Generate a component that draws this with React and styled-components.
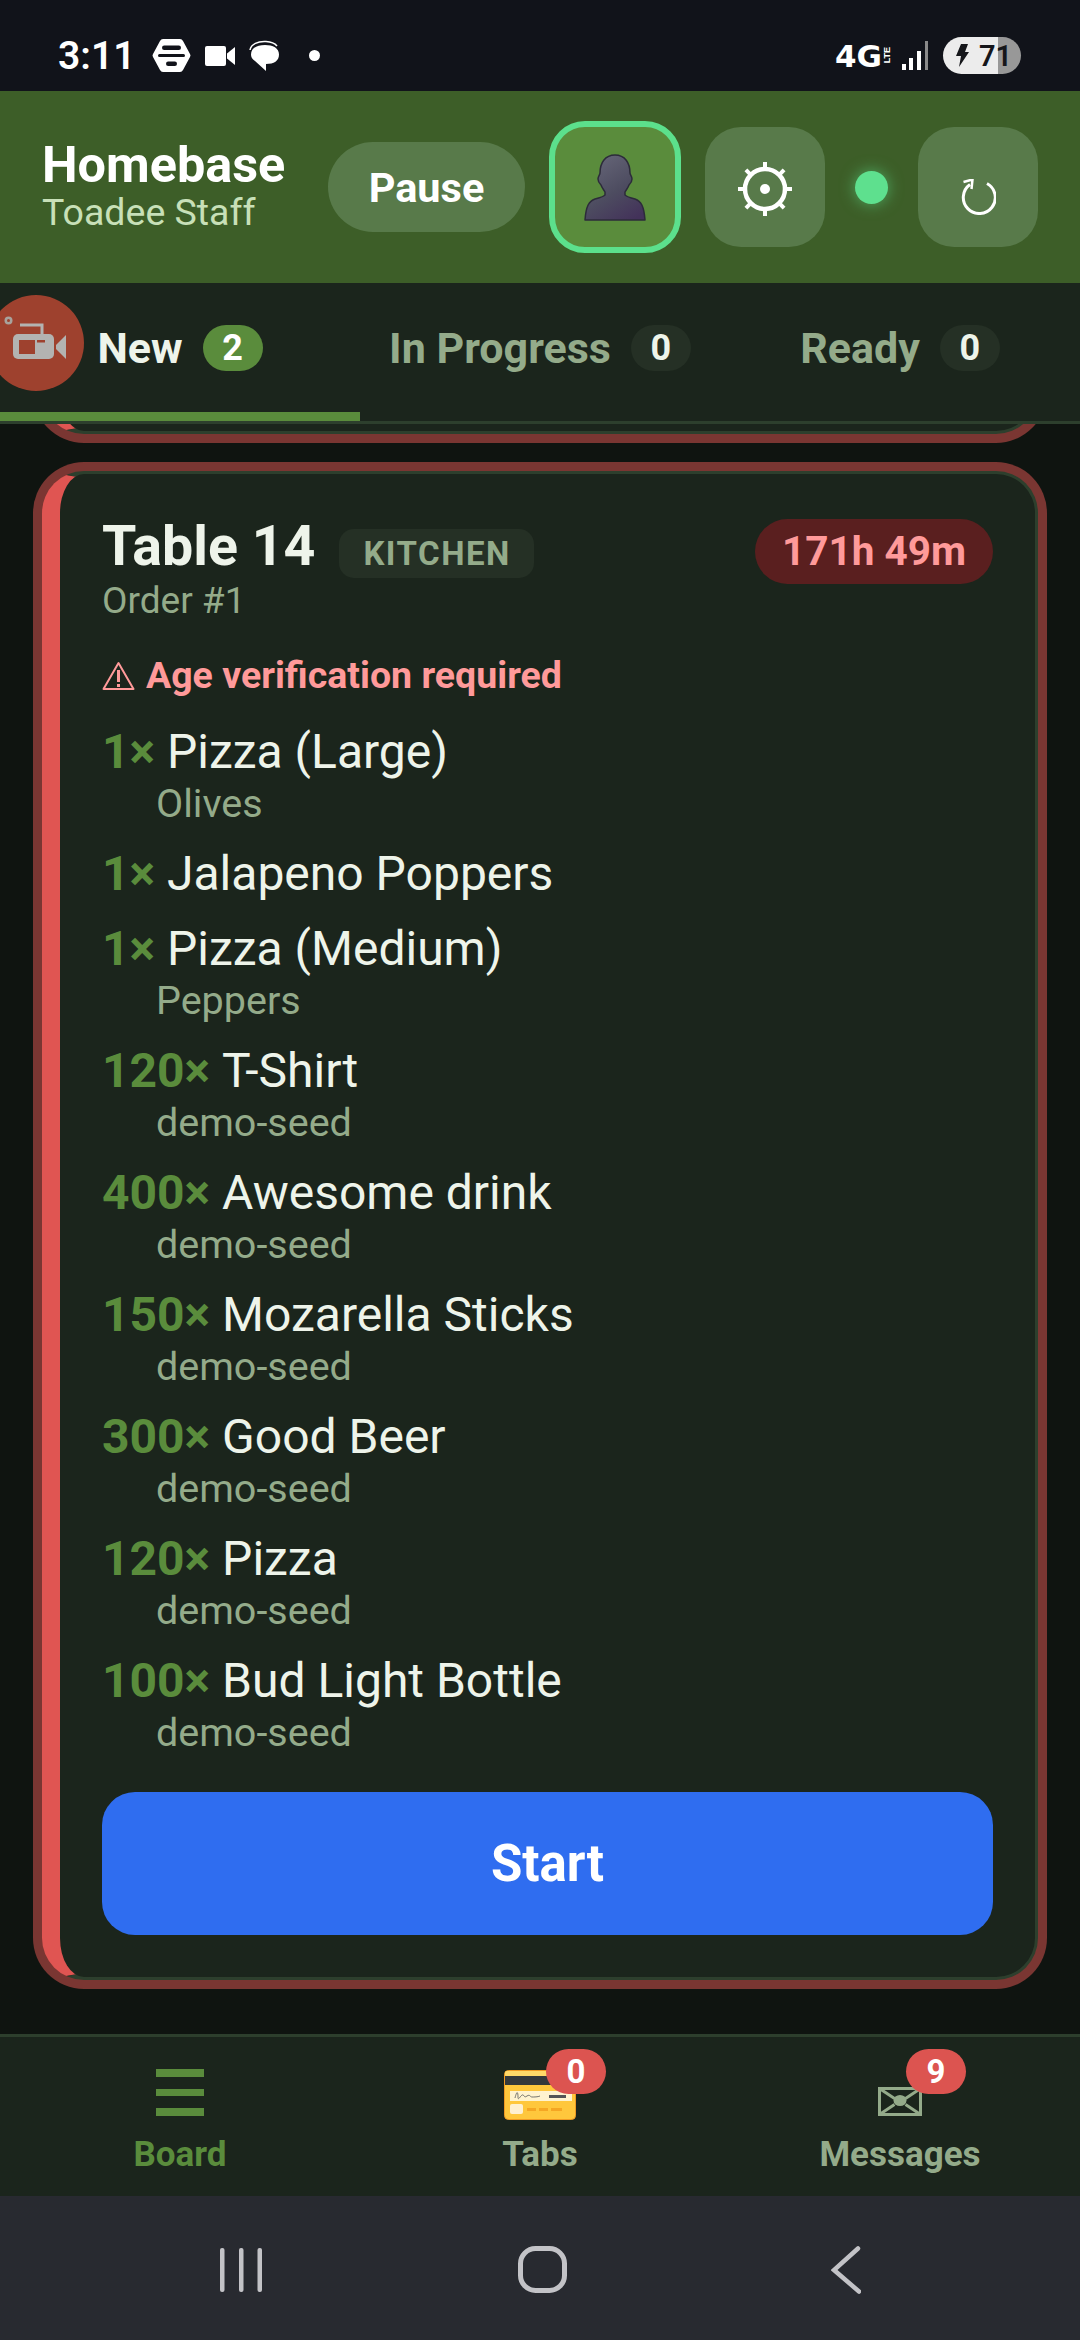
import React from "react";
import styled, { createGlobalStyle } from "styled-components";

const GlobalStyle = createGlobalStyle`
  html, body {
    margin: 0;
    padding: 0;
    background: #0f1410;
  }
  * {
    box-sizing: border-box;
  }
  body {
    font-family: Roboto, "Noto Sans", sans-serif;
  }
`;

const Page = styled.div`
  position: relative;
  width: 1080px;
  height: 2340px;
  display: flex;
  flex-direction: column;
  overflow: hidden;
  background: #0f1410;
`;

// status bar
const StatusBar = styled.div`
  height: 91px;
  flex: none;
  display: flex;
  align-items: center;
  justify-content: space-between;
  padding: 20px 59px 0 58px;
  background: #11131a;
  color: #fff;
`;

const StatusGroup = styled.div`
  display: flex;
  align-items: center;
  gap: ${(p) => p.$gap || 0}px;
`;

const Clock = styled.span`
  font-size: 39px;
  font-weight: 600;
  line-height: 44px;
  margin-right: 3px;
`;

const NetworkMark = styled.span`
  font-family: "DejaVu Sans", sans-serif;
  font-size: 31px;
  font-weight: 700;
  line-height: 30px;
`;

const LteMark = styled.span`
  font-family: "Liberation Sans", sans-serif;
  font-size: 9px;
  font-weight: 700;
  line-height: 9px;
  writing-mode: vertical-rl;
  transform: rotate(180deg);
  margin: 0 10px 0 1px;
`;

const Battery = styled.div`
  width: 78px;
  height: 37px;
  margin-left: 15px;
  border-radius: 19px;
  overflow: hidden;
  display: flex;
  align-items: center;
  gap: 10px;
  padding-left: 13px;
  color: #15161a;
  font-size: 29px;
  font-weight: 600;
  background: linear-gradient(90deg, #ececec 0, #ececec 55px, #989898 55px);
`;

// header
const Header = styled.header`
  height: 192px;
  flex: none;
  display: flex;
  align-items: center;
  justify-content: space-between;
  padding: 0 42px;
  background: #3d5e28;
`;

const Brand = styled.div`
  display: flex;
  flex-direction: column;
`;

const BrandName = styled.span`
  color: #fff;
  font-size: 50.4px;
  font-weight: 700;
  line-height: 50px;
`;

const BrandSub = styled.span`
  color: #c8e0b8;
  font-size: 37.5px;
  font-weight: 400;
  line-height: 44px;
`;

const Controls = styled.div`
  display: flex;
  align-items: center;
  gap: 24px;
`;

const PauseButton = styled.div`
  width: 197px;
  height: 90px;
  display: flex;
  align-items: center;
  justify-content: center;
  border-radius: 45px;
  background: #587a4a;
  color: #fff;
  font-size: 41.5px;
  font-weight: 700;
`;

const IconButton = styled.div`
  width: ${(p) => (p.$active ? 132 : 120)}px;
  height: ${(p) => (p.$active ? 132 : 120)}px;
  display: flex;
  align-items: center;
  justify-content: center;
  border-radius: 36px;
  padding-top: ${(p) => p.$drop || 0}px;
  background: ${(p) => (p.$active ? "#5a8c3c" : "#587a4a")};
  border: ${(p) => (p.$active ? "6px solid #5ce08c" : "none")};
`;

const LiveDot = styled.div`
  width: 33px;
  height: 33px;
  margin: 0 6px;
  border-radius: 50%;
  background: #5ee08e;
  box-shadow: 0 0 15px #5ce08c99;
`;

// tabs
const TabBar = styled.nav`
  height: 141px;
  flex: none;
  display: grid;
  grid-template-columns: repeat(3, 1fr);
  background: #1b251c;
  border-bottom: 3px solid #2d3f2d;
`;

const Tab = styled.div`
  display: flex;
  align-items: center;
  justify-content: center;
  gap: 20px;
  border-bottom: 9px solid ${(p) => (p.$active ? "#5a8c3c" : "transparent")};
  color: ${(p) => (p.$active ? "#eef4ea" : "#94ab8a")};
  font-size: 43px;
  font-weight: 700;
`;

const TabCount = styled.span`
  width: 60px;
  height: 46px;
  display: flex;
  align-items: center;
  justify-content: center;
  border-radius: 23px;
  background: ${(p) => (p.$active ? "#5a8c3c" : "#253025")};
  color: ${(p) => (p.$active ? "#fff" : "#eef4ea")};
  font-size: 36px;
`;

const RecorderBubble = styled.div`
  position: absolute;
  left: -12px;
  top: 295px;
  width: 96px;
  height: 96px;
  border-radius: 50%;
  background: #9e412e;
`;

// orders
const Board = styled.main`
  flex: 1;
  min-height: 0;
  display: flex;
  flex-direction: column;
  gap: 37px;
  overflow: hidden;
`;

const OrderCard = styled.section`
  flex: none;
  margin: ${(p) => (p.$peek ? "-90px 42px 0" : "0 42px")};
  height: ${(p) => (p.$peek ? "100px" : "auto")};
  padding: ${(p) => (p.$peek ? "0" : "42px")};
  border: 3px solid #2d3f2d;
  border-left: 18px solid #e05552;
  border-radius: 42px;
  background: #1b251c;
  box-shadow: 0 0 0 9px #7a3632;
`;

const CardTop = styled.div`
  display: flex;
  align-items: flex-start;
  justify-content: space-between;
`;

const TitleRow = styled.div`
  display: flex;
  align-items: baseline;
  gap: 24px;
`;

const TableName = styled.span`
  color: #eef4ea;
  font-size: 55.5px;
  font-weight: 700;
  line-height: 62px;
`;

const StationChip = styled.span`
  height: 49px;
  padding: 0 23px 0 24px;
  border-radius: 15px;
  background: #253025;
  color: #94ab8a;
  font-size: 33px;
  font-weight: 700;
  line-height: 49px;
  letter-spacing: 1.5px;
`;

const OrderNumber = styled.div`
  margin-top: 2px;
  color: #94ab8a;
  font-size: 37px;
  line-height: 42px;
`;

const TimerChip = styled.span`
  height: 65px;
  margin-top: 3px;
  padding: 0 27px;
  border-radius: 33px;
  background: #5a1f1f;
  color: #ff9a9a;
  font-size: 40.5px;
  font-weight: 700;
  line-height: 65px;
`;

const AgeWarning = styled.div`
  display: flex;
  align-items: center;
  gap: 11px;
  margin-top: 32px;
  color: #ff9a9a;
  font-size: 37.5px;
  font-weight: 700;
  line-height: 42px;
`;

const ItemList = styled.div`
  display: flex;
  flex-direction: column;
  gap: 19px;
  margin-top: 28px;
`;

const ItemLine = styled.div`
  display: flex;
  gap: 12px;
  color: #eef4ea;
  font-size: 48px;
  line-height: 56px;
`;

const Quantity = styled.span`
  color: #5a8c3c;
  font-weight: 700;
`;

const ItemNote = styled.div`
  padding-left: 54px;
  color: #94ab8a;
  font-size: 39.5px;
  line-height: 47px;
`;

const StartButton = styled.div`
  height: 143px;
  margin-top: 36px;
  display: flex;
  align-items: center;
  justify-content: center;
  border-radius: 33px;
  background: #2f6df0;
  color: #fff;
  font-size: 51px;
  font-weight: 700;
`;

// bottom nav
const BottomNav = styled.nav`
  height: 162px;
  flex: none;
  display: grid;
  grid-template-columns: repeat(3, 1fr);
  background: #1b251c;
  border-top: 3px solid #2d3f2d;
`;

const NavItem = styled.div`
  position: relative;
  display: flex;
  flex-direction: column;
  align-items: center;
  justify-content: flex-end;
  padding-bottom: 20px;
  color: ${(p) => (p.$active ? "#5a8c3c" : "#94ab8a")};
`;

const NavIcon = styled.div`
  height: 66px;
  padding-bottom: 18px;
  display: flex;
  align-items: flex-end;
`;

const NavLabel = styled.span`
  font-size: 35px;
  font-weight: 700;
  line-height: 42px;
`;

const NavBadge = styled.span`
  position: absolute;
  left: calc(50% + 6px);
  top: 12px;
  width: 60px;
  height: 45px;
  display: flex;
  align-items: center;
  justify-content: center;
  border-radius: 23px;
  background: #dc5450;
  color: #fff;
  font-size: 33px;
  font-weight: 700;
`;

const SystemNav = styled.div`
  height: 144px;
  flex: none;
  display: flex;
  align-items: center;
  justify-content: center;
  gap: 256px;
  padding-top: 3px;
  background: #282a30;
`;

const BackSlot = styled.div`
  display: flex;
  margin-left: 8px;
`;

const items = [
  { qty: "1×", name: "Pizza (Large)", note: "Olives" },
  { qty: "1×", name: "Jalapeno Poppers" },
  { qty: "1×", name: "Pizza (Medium)", note: "Peppers" },
  { qty: "120×", name: "T-Shirt", note: "demo-seed" },
  { qty: "400×", name: "Awesome drink", note: "demo-seed" },
  { qty: "150×", name: "Mozarella Sticks", note: "demo-seed" },
  { qty: "300×", name: "Good Beer", note: "demo-seed" },
  { qty: "120×", name: "Pizza", note: "demo-seed" },
  { qty: "100×", name: "Bud Light Bottle", note: "demo-seed" },
];

const tabs = [
  { label: "New", count: 2, active: true },
  { label: "In Progress", count: 0 },
  { label: "Ready", count: 0 },
];

function HexIcon() {
  return (
    <svg width="39" height="35" viewBox="0 0 39 35">
      <path
        d="M11 1h17q2 0 3 2l7 13q1 1.500 0 3l-7 13q-1 2-3 2H11q-2 0-3-2L1 19q-1-1.500 0-3L8 3q1-2 3-2z"
        fill="#fff"
      />
      <rect x="10" y="7.500" width="19" height="4.500" rx="2.200" fill="#11131a" />
      <rect x="6" y="16" width="27" height="3" rx="1.500" fill="#11131a" />
      <rect x="14" y="23.500" width="11" height="4.500" rx="2.200" fill="#11131a" />
    </svg>
  );
}

function CameraIcon() {
  return (
    <svg width="30" height="20" viewBox="0 0 30 20">
      <rect width="21" height="20" rx="2" fill="#fff" />
      <path d="M22 7.500L30 1v18l-8-6.500z" fill="#fff" />
    </svg>
  );
}

function ChatIcon() {
  return (
    <svg width="31" height="31" viewBox="0 0 31 31">
      <path d="M1 10C2 4 9 1 17 1.500c6 .3 9 2 11 4.500" fill="none" stroke="#fff" strokeWidth="1.500" />
      <path
        d="M16 5c8 0 14 3 14 9.500S25 24 17 24v7L6 21C3 19 2 17 2 14.500 2 8 8 5 16 5z"
        fill="#fff"
      />
    </svg>
  );
}

function SignalIcon() {
  return (
    <svg width="26" height="29" viewBox="0 0 26 29">
      <rect x="0" y="23" width="4" height="6" fill="#fff" />
      <rect x="7" y="17" width="4" height="12" fill="#fff" />
      <rect x="15" y="10" width="4" height="19" fill="#fff" />
      <rect x="23" y="0" width="3" height="29" fill="#8a8a8a" />
    </svg>
  );
}

function BoltIcon() {
  return (
    <svg width="13" height="23" viewBox="0 0 13 23">
      <path d="M5 0h7L9 8h4L3 23l2-11H0z" fill="#15161a" />
    </svg>
  );
}

function BustIcon() {
  return (
    <svg width="62" height="67" viewBox="0 0 62 67">
      <defs>
        <linearGradient id="bust" x1="0.2" y1="0" x2="0.8" y2="1">
          <stop offset="0" stopColor="#666678" />
          <stop offset="0.55" stopColor="#4d4c60" />
          <stop offset="1" stopColor="#43325a" />
        </linearGradient>
      </defs>
      <path
        d="M31 1c10 0 15 8 15 18 0 2 2 3 2 6s-2 5-3 6c-1 3-3 5-4 7v3c2 2 6 3 10 4 6 2 9 7 10 21H1c1-14 4-19 10-21 4-1 8-2 10-4v-3c-1-2-3-4-4-7-1-1-3-3-3-6s2-4 2-6C16 9 21 1 31 1z"
        fill="url(#bust)"
        stroke="#2c2b3a"
        strokeWidth="1.500"
        strokeLinejoin="round"
      />
    </svg>
  );
}

function TargetGearIcon() {
  const spokes = [0, 45, 90, 135, 180, 225, 270, 315];
  return (
    <svg width="56" height="56" viewBox="0 0 56 56">
      <circle cx="28" cy="28" r="20" fill="none" stroke="#fff" strokeWidth="4.500" />
      <circle cx="28" cy="28" r="5" fill="#fff" />
      {spokes.map((deg) => (
        <rect key={deg} x="26" y="1" width="4" height="8" fill="#fff" transform={`rotate(${deg} 28 28)`} />
      ))}
    </svg>
  );
}

function RefreshIcon() {
  return (
    <svg width="36" height="36" viewBox="-2 0 36 36" fill="none" stroke="#fff">
      <path d="M25 4.500A16 16 0 1 1 8 5.500" strokeWidth="3" />
      <path d="M1.500 3l9-2.500-1 9.500" strokeWidth="2.500" />
    </svg>
  );
}

function WarningIcon() {
  return (
    <svg width="33" height="29" viewBox="0 0 33 29" fill="none" stroke="#ff9a9a" strokeWidth="2">
      <path d="M16.500 2L1.500 28h30z" strokeLinejoin="round" />
      <path d="M16.500 9v12" strokeWidth="3" />
      <path d="M16.500 23v3" strokeWidth="3" />
    </svg>
  );
}

function RecorderIcon() {
  return (
    <svg width="96" height="96" viewBox="0 0 96 96">
      <circle cx="20.500" cy="25.500" r="4" fill="#a8a29c" />
      <circle cx="20.500" cy="25.500" r="1.500" fill="#9e412e" />
      <path d="M32 30h22v10" fill="none" stroke="#b3b3b1" strokeWidth="3" />
      <rect x="25" y="39" width="41" height="25" rx="5" fill="#b3b3b1" />
      <rect x="31" y="45" width="16" height="14" fill="#9e412e" />
      <rect x="49" y="45" width="8" height="2.500" fill="#9e412e" />
      <path d="M68 50l10-10v24l-10-10z" fill="#b3b3b1" />
    </svg>
  );
}

function MenuIcon() {
  return (
    <svg width="48" height="47" viewBox="0 0 48 47" fill="#5a8c3c">
      <rect width="48" height="8" />
      <rect y="20" width="48" height="7" />
      <rect y="39" width="48" height="8" />
    </svg>
  );
}

function CardIcon() {
  return (
    <svg width="72" height="50" viewBox="0 0 72 50" style={{ marginBottom: -4 }}>
      <rect x="0.500" y="0.500" width="71" height="49" rx="4" fill="#ffc73c" stroke="#f09a22" />
      <rect x="1" y="1" width="70" height="5" rx="2" fill="#ffd868" />
      <rect x="1" y="6" width="70" height="9" fill="#34383a" />
      <rect x="6" y="21" width="62" height="10" fill="#fff3cf" />
      <path
        d="M11 28c2-8 3-6 3-1s3-3 5-2 1 3 4 1 3 1 5 1 6 0 8-1"
        fill="none"
        stroke="#555"
        strokeWidth="0.800"
      />
      <rect x="45" y="25" width="17" height="3" fill="#555" />
      <rect x="6" y="34" width="13" height="10" rx="2" fill="#fff0d0" />
      <rect x="23" y="38" width="9" height="3" fill="#f5a623" />
      <rect x="35" y="38" width="9" height="3" fill="#f5a623" />
      <rect x="47" y="38" width="11" height="3" fill="#f5a623" />
    </svg>
  );
}

function EnvelopeIcon() {
  return (
    <svg width="44" height="29" viewBox="0 0 44 29" fill="none" stroke="#94ab8a" strokeWidth="3">
      <rect x="1.500" y="1.500" width="41" height="26" />
      <path d="M1.500 1.500l15 10M42.500 1.500l-15 10M1.500 27.500l15-10M42.500 27.500l-15-10" />
      <ellipse cx="22" cy="13.500" rx="6.500" ry="5.500" fill="#94ab8a" stroke="none" />
    </svg>
  );
}

function RecentsIcon() {
  return (
    <svg width="42" height="44" viewBox="0 0 42 44" fill="#c3c3c7">
      <rect x="0" width="4.500" height="44" rx="2" />
      <rect x="19" width="4.500" height="44" rx="2" />
      <rect x="37.500" width="4.500" height="44" rx="2" />
    </svg>
  );
}

function HomeIcon() {
  return (
    <svg width="49" height="47" viewBox="0 0 49 47" fill="none" stroke="#c3c3c7" strokeWidth="5">
      <rect x="2.500" y="2.500" width="44" height="42" rx="15" />
    </svg>
  );
}

function BackIcon() {
  return (
    <svg width="30" height="48" viewBox="0 0 30 48" fill="none" stroke="#c3c3c7" strokeWidth="4.500" strokeLinecap="round">
      <path d="M27 2.500L3 24l25 21.500" />
    </svg>
  );
}

export default function App() {
  return (
    <Page>
      <GlobalStyle />
      <StatusBar>
        <StatusGroup $gap={14}>
          <Clock>3:11</Clock>
          <HexIcon />
          <CameraIcon />
          <ChatIcon />
          <svg width="11" height="11" viewBox="0 0 11 11" style={{ marginLeft: 15 }}>
            <circle cx="5.500" cy="5.500" r="5.500" fill="#fff" />
          </svg>
        </StatusGroup>
        <StatusGroup>
          <NetworkMark>4G</NetworkMark>
          <LteMark>LTE</LteMark>
          <SignalIcon />
          <Battery>
            <BoltIcon />
            <span>71</span>
          </Battery>
        </StatusGroup>
      </StatusBar>

      <Header>
        <Brand>
          <BrandName>Homebase</BrandName>
          <BrandSub>Toadee Staff</BrandSub>
        </Brand>
        <Controls>
          <PauseButton>Pause</PauseButton>
          <IconButton $active>
            <BustIcon />
          </IconButton>
          <IconButton $drop={4}>
            <TargetGearIcon />
          </IconButton>
          <LiveDot />
          <IconButton $drop={19}>
            <RefreshIcon />
          </IconButton>
        </Controls>
      </Header>

      <TabBar>
        {tabs.map((tab) => (
          <Tab key={tab.label} $active={tab.active}>
            {tab.label}
            <TabCount $active={tab.active}>{tab.count}</TabCount>
          </Tab>
        ))}
      </TabBar>

      <Board>
        <OrderCard $peek />
        <OrderCard>
          <CardTop>
            <div>
              <TitleRow>
                <TableName>Table 14</TableName>
                <StationChip>KITCHEN</StationChip>
              </TitleRow>
              <OrderNumber>Order #1</OrderNumber>
            </div>
            <TimerChip>171h 49m</TimerChip>
          </CardTop>
          <AgeWarning>
            <WarningIcon />
            Age verification required
          </AgeWarning>
          <ItemList>
            {items.map((item) => (
              <div key={item.qty + item.name}>
                <ItemLine>
                  <Quantity>{item.qty}</Quantity>
                  {item.name}
                </ItemLine>
                {item.note ? <ItemNote>{item.note}</ItemNote> : null}
              </div>
            ))}
          </ItemList>
          <StartButton>Start</StartButton>
        </OrderCard>
      </Board>

      <BottomNav>
        <NavItem $active>
          <NavIcon>
            <MenuIcon />
          </NavIcon>
          <NavLabel>Board</NavLabel>
        </NavItem>
        <NavItem>
          <NavIcon>
            <CardIcon />
          </NavIcon>
          <NavLabel>Tabs</NavLabel>
          <NavBadge>0</NavBadge>
        </NavItem>
        <NavItem>
          <NavIcon>
            <EnvelopeIcon />
          </NavIcon>
          <NavLabel>Messages</NavLabel>
          <NavBadge>9</NavBadge>
        </NavItem>
      </BottomNav>

      <SystemNav>
        <RecentsIcon />
        <HomeIcon />
        <BackSlot>
          <BackIcon />
        </BackSlot>
      </SystemNav>

      <RecorderBubble>
        <RecorderIcon />
      </RecorderBubble>
    </Page>
  );
}
